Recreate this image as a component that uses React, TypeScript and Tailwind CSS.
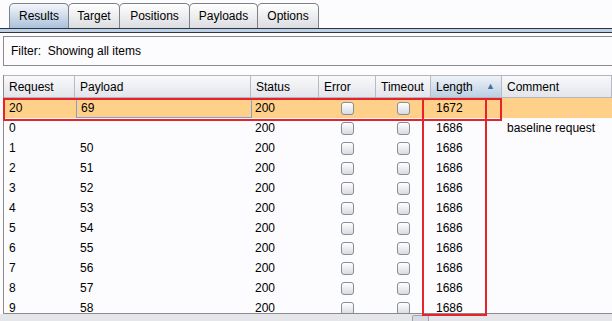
import React from "react";

const tabs = [
  { name: "Results", w: "w-[60px]" },
  { name: "Target", w: "w-[52px]" },
  { name: "Positions", w: "w-[71px]" },
  { name: "Payloads", w: "w-[69px]" },
  { name: "Options", w: "w-[62px]" },
];

const cols = [
  { name: "Request", w: "w-[71px]" },
  { name: "Payload", w: "w-[176px]" },
  { name: "Status", w: "w-[68px]" },
  { name: "Error", w: "w-[57px]" },
  { name: "Timeout", w: "w-[55px]" },
  { name: "Length", w: "w-[71px]" },
  { name: "Comment", w: "flex-1" },
];

const rows = [
  { req: "20", payload: "69", len: "1672", comment: "", selected: true },
  { req: "0", payload: "", len: "1686", comment: "baseline request" },
  ...Array.from({ length: 9 }, (_, i) => ({
    req: String(i + 1),
    payload: String(50 + i),
    len: "1686",
    comment: "",
  })),
];

const Checkbox = () => (
  <span className="block w-[13px] h-[13px] rounded-[3px] border border-[#8a8d95] bg-gradient-to-b from-white to-[#d8dbe2]" />
);

export default function App() {
  return (
    <div className="relative w-[612px] h-[321px] overflow-hidden bg-[#fcfbfd] font-['Liberation_Sans',Arial,sans-serif] text-[12px] text-black">
      {/* tab strip */}
      <div className="flex items-end h-[28px] pl-[10px]">
        {tabs.map((t, i) => (
          <div
            key={t.name}
            className={
              t.w +
              " h-[25px] flex items-center justify-center border border-b-0 border-[#7d8087] rounded-t-[5px] -ml-px " +
              (i === 0
                ? "bg-gradient-to-b from-[#f4f7fb] to-[#aac1da]"
                : "bg-gradient-to-b from-white to-[#dcdde1]")
            }
          >
            {t.name}
          </div>
        ))}
      </div>
      <div className="h-[5px] border-t border-b border-[#30343c] bg-[#bcd0e8]" />

      {/* filter */}
      <div className="mt-[3px] ml-[3px] h-[30px] border border-r-0 border-[#8d8a8d] flex items-center pl-[7px]">
        Filter:&nbsp; Showing all items
      </div>

      {/* table */}
      <div className="mt-[9px] ml-[3px] h-[239px] border-l border-b border-[#8d8a8d] overflow-hidden">
        <div className="flex h-[23px] border-t border-b border-[#b4b6be] bg-gradient-to-b from-[#f9f9fb] to-[#e3e5eb]">
          {cols.map((c) => (
            <div
              key={c.name}
              className={
                c.w +
                " flex items-center pl-[5px] border-r border-[#b8bac2] " +
                (c.name === "Length"
                  ? "bg-gradient-to-b from-[#eef3f8] to-[#bccfe2] justify-between pr-[6px]"
                  : "")
              }
            >
              <span>{c.name}</span>
              {c.name === "Length" && (
                <span className="text-[#3e6fa8] text-[9px]">▲</span>
              )}
            </div>
          ))}
        </div>
        {rows.map((r, i) => (
          <div
            key={i}
            className={"flex h-[20px] items-center " + (r.selected ? "bg-[#ffd08a]" : "")}
          >
            <div className="w-[71px] pl-[5px]">{r.req}</div>
            <div
              className={
                "w-[176px] h-full flex items-center pl-[4px] " +
                (r.selected ? "border border-[#7ba2d6] ml-px" : "pl-[5px]")
              }
            >
              {r.payload}
            </div>
            <div className={"w-[68px] pl-[4px] " + (r.selected ? "-ml-px" : "")}>200</div>
            <div className="w-[57px] flex justify-center">
              <Checkbox />
            </div>
            <div className="w-[55px] flex justify-center">
              <Checkbox />
            </div>
            <div className="w-[71px] pl-[5px]">{r.len}</div>
            <div className="flex-1 pl-[5px]">{r.comment}</div>
          </div>
        ))}
      </div>

      {/* horizontal scrollbar */}
      <div className="relative h-[8px] bg-[#e4e6ea]">
        <div className="absolute left-[412px] top-[1px] w-[17px] h-[7px] rounded-t-[2px] border border-b-0 border-[#9ea2aa] bg-[#d7dae0]" />
      </div>

      {/* red annotation boxes */}
      <div className="absolute left-[3px] top-[98px] w-[499px] h-[23px] border-2 border-[#e8222b]" />
      <div className="absolute left-[422px] top-[98px] w-[65px] h-[218px] border-2 border-[#e8222b]" />
    </div>
  );
}
